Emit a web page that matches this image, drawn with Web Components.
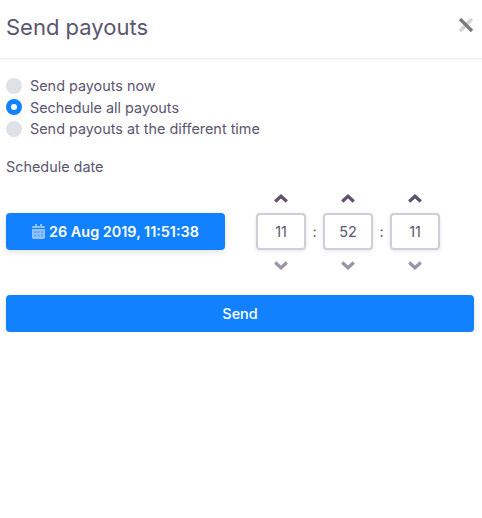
<!DOCTYPE html>
<html>
<head>
<meta charset="utf-8">
<title>Send payouts</title>
<style>
  html, body { margin: 0; background: #fff; }
  body { font-family: Inter, "Liberation Sans", sans-serif; color: #5b5670; }
</style>
</head>
<body>
<payout-modal>
  <span slot="title">Send payouts</span>
  <radio-row>Send payouts now</radio-row>
  <radio-row checked>Sechedule all payouts</radio-row>
  <radio-row>Send payouts at the different time</radio-row>
  <date-time-picker slot="schedule" date="26 Aug 2019, 11:51:38"></date-time-picker>
  <blue-button slot="action" wide>Send</blue-button>
</payout-modal>

<script>
class PayoutModal extends HTMLElement {
  constructor() {
    super();
    this.attachShadow({ mode: 'open' });
    this.shadowRoot.innerHTML = `
      <style>
        :host { display: block; }
        header {
          height: 58px;
          border-bottom: 1px solid #e9ebee;
          padding: 0 8px 0 6px;
          display: flex;
          align-items: center;
          justify-content: space-between;
        }
        h2 { margin: 0 0 4px; font-size: 22px; line-height: 54px; font-weight: 400; }
        svg { display: block; margin-bottom: 9px; }
        .body { padding: 16px 8px 0 6px; }
        .radios { display: flex; flex-direction: column; }
        .label { margin-top: 16px; font-size: 14.4px; line-height: 22px; height: 22px; }
        .schedule { margin-top: 16px; }
        .action { margin-top: 25px; }
      </style>
      <header>
        <h2><slot name="title"></slot></h2>
        <svg width="16" height="16" viewBox="0 0 16 16">
          <path d="M14 2 2 14" stroke="#d4d4d6" stroke-width="3.4"/>
          <path d="M2 2 14 14" stroke="#7b7b80" stroke-width="3.4"/>
        </svg>
      </header>
      <div class="body">
        <div class="radios"><slot></slot></div>
        <div class="label">Schedule date</div>
        <div class="schedule"><slot name="schedule"></slot></div>
        <div class="action"><slot name="action"></slot></div>
      </div>
    `;
  }
}

class RadioRow extends HTMLElement {
  constructor() {
    super();
    this.attachShadow({ mode: 'open' });
    this.shadowRoot.innerHTML = `
      <style>
        :host { display: flex; align-items: center; gap: 8px; height: 21.5px; font-size: 14.4px; }
        .dot {
          width: 16px;
          height: 16px;
          border-radius: 50%;
          background: #dee2e6;
          flex: none;
          display: flex;
          align-items: center;
          justify-content: center;
        }
        :host([checked]) .dot { background: #1181ff; }
        :host([checked]) .dot::after {
          content: '';
          width: 6px;
          height: 6px;
          border-radius: 50%;
          background: #fff;
        }
      </style>
      <span class="dot"></span>
      <span><slot></slot></span>
    `;
  }
}

class BlueButton extends HTMLElement {
  constructor() {
    super();
    this.attachShadow({ mode: 'open' });
    this.shadowRoot.innerHTML = `
      <style>
        :host {
          display: flex;
          align-items: center;
          justify-content: center;
          gap: 4px;
          height: 37px;
          border-radius: 4px;
          background: #1181ff;
          color: #fff;
          font-size: 14.4px;
          font-weight: 500;
          box-shadow: 0 2px 6px rgba(0, 0, 0, .12);
        }
      </style>
      <slot></slot>
    `;
  }
}

class TimeSpinner extends HTMLElement {
  constructor() {
    super();
    this.attachShadow({ mode: 'open' });
    const chevron = d => `<svg width="14" height="9" viewBox="0 0 14 9"><path d="${d}" fill="none" stroke-width="3.2"/></svg>`;
    this.shadowRoot.innerHTML = `
      <style>
        :host { display: flex; flex-direction: column; align-items: center; width: 50px; }
        svg { display: block; }
        .up { stroke: #5e5172; margin-bottom: 10px; }
        .down { stroke: #9c93a8; margin-top: 11px; }
        .box {
          box-sizing: border-box;
          width: 50px;
          height: 37px;
          border: 2px solid #cdd0d8;
          border-radius: 4px;
          background: #fff;
          display: flex;
          align-items: center;
          justify-content: center;
          font-size: 14.4px;
          box-shadow: 0 1px 4px rgba(0, 0, 0, .1);
        }
      </style>
      <div class="up">${chevron('M1.2 7.5 7 2.2 12.8 7.5')}</div>
      <div class="box">${this.getAttribute('value')}</div>
      <div class="down">${chevron('M1.2 1.5 7 6.8 12.8 1.5')}</div>
    `;
  }
}

class DateTimePicker extends HTMLElement {
  constructor() {
    super();
    this.attachShadow({ mode: 'open' });
    this.shadowRoot.innerHTML = `
      <style>
        :host { display: flex; align-items: center; }
        blue-button { width: 219px; flex: none; font-weight: 600; }
        .times { display: flex; align-items: center; margin-left: 31px; }
        .sep { width: 17px; text-align: center; font-size: 14.4px; }
      </style>
      <blue-button>
        <svg width="13" height="15" viewBox="0 0 13 15">
          <path fill="#8fc2ff" d="M0 5h13v8.6A1.4 1.4 0 0 1 11.6 15H1.4A1.4 1.4 0 0 1 0 13.6zM1.4 2H3V0h2v2h3V0h2v2h1.6A1.4 1.4 0 0 1 13 3.4V4H0v-.6A1.4 1.4 0 0 1 1.4 2z"/>
          <path fill="#5aa5ff" d="M2 7h2v2H2zM5.5 7h2v2h-2zM9 7h2v2H9zM2 10.5h2v2H2zM5.5 10.5h2v2h-2zM9 10.5h2v2H9z"/>
        </svg>
        <span>${this.getAttribute('date')}</span>
      </blue-button>
      <div class="times">
        <time-spinner value="11"></time-spinner>
        <span class="sep">:</span>
        <time-spinner value="52"></time-spinner>
        <span class="sep">:</span>
        <time-spinner value="11"></time-spinner>
      </div>
    `;
  }
}

customElements.define('blue-button', BlueButton);
customElements.define('time-spinner', TimeSpinner);
customElements.define('date-time-picker', DateTimePicker);
customElements.define('radio-row', RadioRow);
customElements.define('payout-modal', PayoutModal);
</script>
</body>
</html>
